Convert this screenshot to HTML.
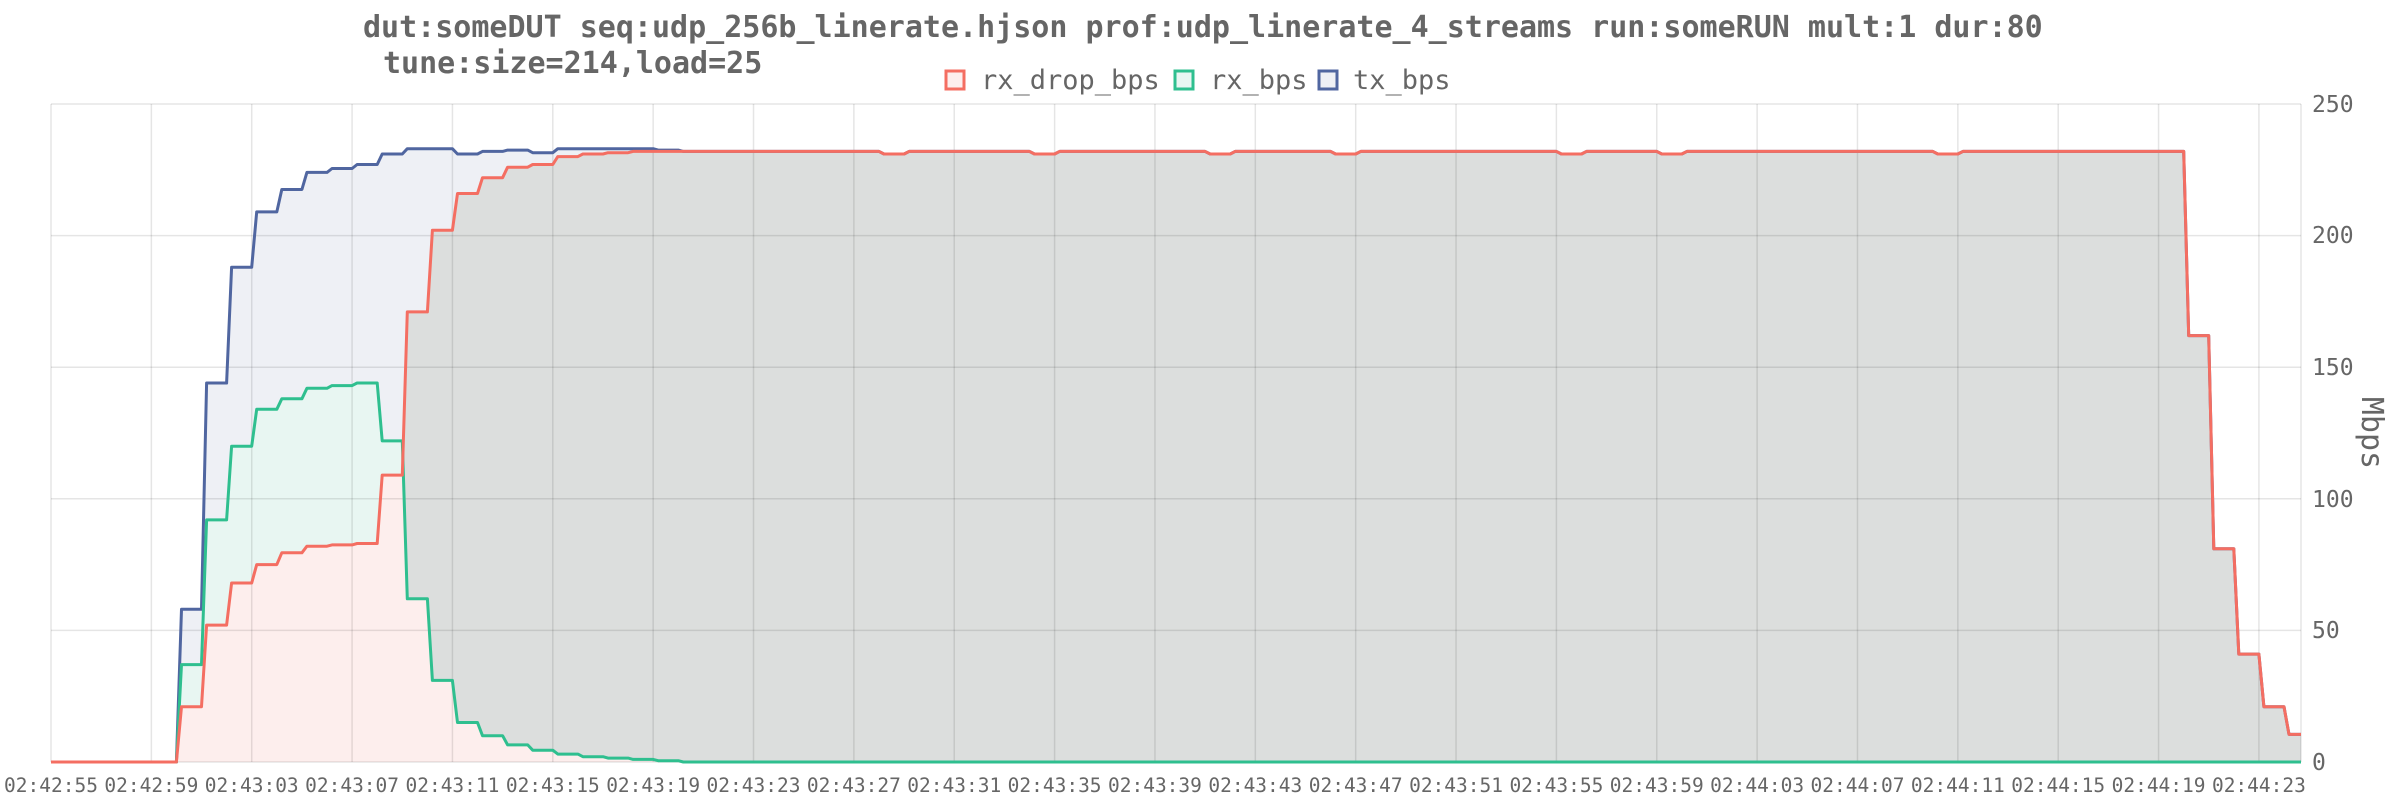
<!DOCTYPE html>
<html><head><meta charset="utf-8"><style>
html,body{margin:0;padding:0;background:#fff;}
svg{display:block;font-family:"DejaVu Sans Mono","Liberation Mono",monospace;}
</style></head><body>
<svg id="s" width="2400" height="800" viewBox="0 0 2400 800" xmlns="http://www.w3.org/2000/svg">
<defs><clipPath id="gclip"><path id="gclipPath" d=""/></clipPath></defs>
<g id="fills"></g>
<g id="grid"></g>
<g id="lines"></g>
<text x="363" y="37" font-size="30" font-weight="bold" fill="#666">dut:someDUT seq:udp_256b_linerate.hjson prof:udp_linerate_4_streams run:someRUN mult:1 dur:80</text>
<text x="383" y="73" font-size="30" font-weight="bold" fill="#666">tune:size=214,load=25</text>
<rect x="946" y="71" width="18" height="18" fill="#fdeeed" stroke="#f46e62" stroke-width="3"/>
<text x="981" y="89" font-size="27" fill="#666">rx_drop_bps</text>
<rect x="1175" y="71" width="18" height="18" fill="#e8f6f2" stroke="#2fbf8f" stroke-width="3"/>
<text x="1210" y="89" font-size="27" fill="#666">rx_bps</text>
<rect x="1319" y="71" width="18" height="18" fill="#eef0f5" stroke="#5066a0" stroke-width="3"/>
<text x="1353" y="89" font-size="27" fill="#666">tx_bps</text>
<g font-size="23" fill="#666">
<text x="2312" y="770">0</text><text x="2312" y="638">50</text><text x="2312" y="507">100</text><text x="2312" y="375">150</text><text x="2312" y="243">200</text><text x="2312" y="112">250</text>
</g>
<text transform="translate(2362,433) rotate(90)" font-size="30" fill="#666" text-anchor="middle">Mbps</text>
<g id="xl" font-size="19.5" fill="#666" text-anchor="middle"></g>
</svg>
<script>
var X0=51,PX=25.09,Y0=762,PY=2.632,XE=2301;
function xx(t){return Math.min(X0+PX*t,XE);}
function yy(v){return Y0-PY*v;}
var red={5:21,6:52,7:68,8:75,9:79.5,10:82,11:82.5,12:83,13:109,14:171,15:202,16:216,17:222,18:226,19:227,20:230,21:231,22:231.5,85:162,86:81,87:41,88:21,89:10.5};
var dips=[20,33,39,46,51,60,64,75];
var grn={5:37,6:92,7:120,8:134,9:138,10:142,11:143,12:144,13:122,14:62,15:31,16:15,17:10,18:6.5,19:4.5,20:3,21:2,22:1.5,23:1,24:0.5};
function rv(k){if(red[k]!==undefined)return red[k];return dips.indexOf(k)>=0?231:232;}
function gv(k){return grn[k]!==undefined?grn[k]:0;}
function pts(f){var p=[[0,0],[5,0]];for(var k=5;k<=89;k++){var v=f(k);p.push([k+0.2,v]);p.push([k==89?89.7:k+1.0,v]);}return p;}
function line(p){return p.map(function(a,i){return (i?'L':'M')+xx(a[0]).toFixed(1)+' '+yy(a[1]).toFixed(1);}).join(' ');}
function area(p){return line(p)+' L'+XE+' '+Y0+' L'+X0+' '+Y0+' Z';}
var R=pts(rv),G=pts(gv),B=pts(function(k){return rv(k)+gv(k);});
var NS='http://www.w3.org/2000/svg';
function el(parent,tag,attrs){var e=document.createElementNS(NS,tag);for(var a in attrs)e.setAttribute(a,attrs[a]);document.getElementById(parent).appendChild(e);return e;}
document.getElementById('gclipPath').setAttribute('d',area(G));
el('fills','path',{d:area(B),fill:'#eef0f5'});
el('fills','path',{d:area(G),fill:'#e8f6f2'});
el('fills','path',{d:area(R),fill:'#dcdedd'});
el('fills','path',{d:area(R),fill:'#fdeeed','clip-path':'url(#gclip)'});
for(var i=0;i<=5;i++){var y=Y0-i*131.6;el('grid','line',{x1:X0,x2:XE,y1:y,y2:y,stroke:'rgba(0,0,0,0.1)','stroke-width':1.5});}
for(var t=0;t<=88;t+=4){var x=X0+PX*t;el('grid','line',{x1:x,x2:x,y1:104,y2:Y0,stroke:'rgba(0,0,0,0.1)','stroke-width':1.5});
var s=55+t,m=42+Math.floor(s/60);s=s%60;var tx=el('xl','text',{x:x,y:792});tx.textContent='02:'+m+':'+(s<10?'0':'')+s;}
el('grid','line',{x1:XE,x2:XE,y1:104,y2:Y0,stroke:'rgba(0,0,0,0.1)','stroke-width':1.5});
el('lines','path',{d:line(B),fill:'none',stroke:'#5066a0','stroke-width':3,'stroke-linejoin':'round'});
el('lines','path',{d:line(G),fill:'none',stroke:'#2fbf8f','stroke-width':3,'stroke-linejoin':'round'});
el('lines','path',{d:line(R),fill:'none',stroke:'#f46e62','stroke-width':3,'stroke-linejoin':'round'});
</script>
</body></html>
